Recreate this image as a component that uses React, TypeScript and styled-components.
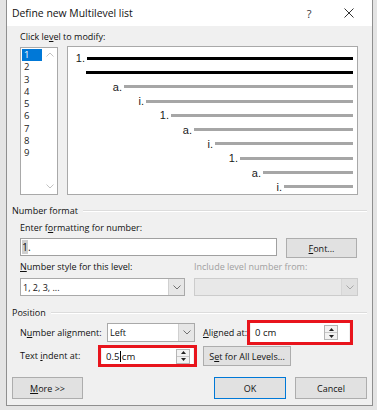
import React from 'react';
import styled, { createGlobalStyle } from 'styled-components';

const GlobalStyle = createGlobalStyle`
  html, body {
    margin: 0;
    padding: 0;
  }
  body {
    font-family: "Open Sans", "Noto Sans", sans-serif;
    font-size: 9px;
    color: #111;
  }
  * {
    box-sizing: border-box;
  }
`;

const Page = styled.div`
  width: 377px;
  height: 410px;
  overflow: hidden;
  display: flex;
  align-items: flex-start;
  padding-left: 6px;
  background: #e4e4e4;
`;

const Dialog = styled.div`
  width: 367px;
  height: 406px;
  border: 1px solid #8f8f8f;
  border-top: none;
  background: #f0f0f0;
  display: flex;
  flex-direction: column;
`;

const TitleBar = styled.div`
  height: 26px;
  background: #fff;
  display: flex;
  align-items: center;
  padding-left: 5px;
`;

const Title = styled.div`
  flex: 1;
  font-size: 10.4px;
`;

const TitleButton = styled.div<{ $w: number }>`
  width: ${(p) => p.$w}px;
  height: 26px;
  display: flex;
  align-items: center;
  justify-content: center;
  font-size: 11px;
  color: #333;
`;

const Body = styled.div`
  display: flex;
  flex-direction: column;
  padding: 3px 5px 0 5px;
`;

const Label = styled.div<{ $muted?: boolean; $w?: number }>`
  height: 16px;
  line-height: 16px;
  white-space: nowrap;
  color: ${(p) => (p.$muted ? '#a0a0a0' : '#111')};
  ${(p) => (p.$w ? `width: ${p.$w}px; flex: none;` : '')}
`;

const Indent = styled.div<{ $top?: number }>`
  margin-left: 8px;
  margin-top: ${(p) => p.$top ?? 0}px;
  display: flex;
  align-items: flex-start;
`;

const U = styled.span`
  text-decoration: underline;
`;

const LevelList = styled.div`
  width: 38px;
  height: 148px;
  border: 1px solid #a9a9a9;
  background: #fff;
  display: flex;
  flex: none;
`;

const LevelItems = styled.div`
  flex: 1;
  padding: 1px 0 0 1px;
`;

const LevelItem = styled.div<{ $selected?: boolean }>`
  height: 12.25px;
  line-height: 12.25px;
  padding-left: 2px;
  font-size: 9.5px;
  background: ${(p) => (p.$selected ? '#0078d7' : 'transparent')};
  color: ${(p) => (p.$selected ? '#fff' : '#222')};
`;

const ScrollTrack = styled.div`
  width: 15px;
  display: flex;
  flex-direction: column;
  justify-content: space-between;
  align-items: center;
  padding: 4px 0 5px;
`;

const Preview = styled.div`
  margin-left: 9px;
  width: 291px;
  height: 149px;
  margin-top: -1px;
  border: 1px solid #a9a9a9;
  background: #fff;
  padding: 4px 4px 0 0;
  display: flex;
  flex-direction: column;
`;

const PreviewRow = styled.div`
  height: 14.55px;
  display: flex;
  align-items: center;
`;

const PreviewLabel = styled.div<{ $w: number }>`
  width: ${(p) => p.$w}px;
  flex: none;
  text-align: right;
  padding-right: 2px;
  font-family: "Liberation Sans", Arial, sans-serif;
  font-size: 11px;
  color: #1a1a1a;
`;

const PreviewLine = styled.div<{ $dark?: boolean }>`
  flex: 1;
  height: 3px;
  background: ${(p) => (p.$dark ? '#000' : '#a6a6a6')};
`;

const GroupHeader = styled.div<{ $top: number }>`
  margin-top: ${(p) => p.$top}px;
  height: 16px;
  display: flex;
  align-items: center;
  gap: 5px;
  &::after {
    content: '';
    flex: 1;
    height: 1px;
    background: #dcdcdc;
    box-shadow: 0 1px 0 #fff;
  }
`;

const TextBox = styled.div<{ $w: number }>`
  width: ${(p) => p.$w}px;
  height: 18px;
  border: 1px solid #a0a0a0;
  background: #fff;
  display: flex;
  align-items: center;
  padding-left: 1px;
  font-size: 10.5px;
  flex: none;
`;

const Selected = styled.span`
  background: #cfcfcf;
`;

const Button = styled.div<{ $w: number; $h?: number; $left?: number; $default?: boolean }>`
  width: ${(p) => p.$w}px;
  height: ${(p) => p.$h ?? 22}px;
  margin-left: ${(p) => p.$left ?? 0}px;
  flex: none;
  background: #e1e1e1;
  border: 1px solid ${(p) => (p.$default ? '#0078d7' : '#adadad')};
  display: flex;
  align-items: center;
  justify-content: center;
  white-space: nowrap;
`;

const Select = styled.div<{ $w: number; $h?: number; $disabled?: boolean; $left?: number }>`
  width: ${(p) => p.$w}px;
  height: ${(p) => p.$h ?? 18}px;
  margin-left: ${(p) => p.$left ?? 0}px;
  flex: none;
  border: 1px solid ${(p) => (p.$disabled ? '#cccccc' : '#a9a9a9')};
  background: ${(p) => (p.$disabled ? '#e8e8e8' : '#fff')};
  display: flex;
  align-items: stretch;
`;

const SelectText = styled.div`
  flex: 1;
  display: flex;
  align-items: center;
  padding-left: 2px;
`;

const SelectArrow = styled.div<{ $disabled?: boolean }>`
  width: 16px;
  background: ${(p) => (p.$disabled ? '#e0e0e0' : '#e6e6e6')};
  border-left: 1px solid ${(p) => (p.$disabled ? '#d6d6d6' : '#d0d0d0')};
  display: flex;
  align-items: center;
  justify-content: center;
`;

const PosRow = styled.div<{ $h: number }>`
  height: ${(p) => p.$h}px;
  margin-left: 8px;
  display: flex;
  align-items: center;
`;

const Highlight = styled.div<{ $w: number; $h: number }>`
  width: ${(p) => p.$w}px;
  height: ${(p) => p.$h}px;
  flex: none;
  border: 3px solid #e8141c;
  padding: 0 1px;
  display: flex;
`;

const SpinBox = styled.div<{ $gap: number }>`
  flex: 1;
  background: #fff;
  display: flex;
  align-items: center;
  padding: 0 ${(p) => p.$gap}px 0 4px;
  font-size: 9.5px;
`;

const SpinValue = styled.div`
  flex: 1;
  display: flex;
  align-items: center;
`;

const Caret = styled.span`
  display: inline-block;
  width: 1px;
  height: 11px;
  background: #000;
  margin: 0 1px 0 0.5px;
`;

const Spinner = styled.div`
  width: 14px;
  height: 15px;
  border: 1px solid #b5b5b5;
  background: #f2f2f2;
  display: flex;
  flex-direction: column;
`;

const SpinHalf = styled.div<{ $bottom?: boolean }>`
  flex: 1;
  display: flex;
  align-items: center;
  justify-content: center;
  ${(p) => (p.$bottom ? 'border-top: 1px solid #c8c8c8;' : '')}
`;

const Footer = styled.div`
  margin-top: 10px;
  display: flex;
`;

const Chevron = ({ up, color = '#707070' }: { up?: boolean; color?: string }) => (
  <svg width="8" height="5" viewBox="0 0 8 5">
    <path
      d={up ? 'M0.5 4.5 L4 1 L7.5 4.5' : 'M0.5 0.5 L4 4 L7.5 0.5'}
      fill="none"
      stroke={color}
      strokeWidth="1"
    />
  </svg>
);

const Tri = ({ up }: { up?: boolean }) => (
  <svg width="5" height="3" viewBox="0 0 5 3">
    <path d={up ? 'M0 3 L2.5 0 L5 3 Z' : 'M0 0 L2.5 3 L5 0 Z'} fill="#222" />
  </svg>
);

const Spin = ({ gap, children }: { gap: number; children: React.ReactNode }) => (
  <SpinBox $gap={gap}>
    <SpinValue>{children}</SpinValue>
    <Spinner>
      <SpinHalf>
        <Tri up />
      </SpinHalf>
      <SpinHalf $bottom>
        <Tri />
      </SpinHalf>
    </Spinner>
  </SpinBox>
);

const previewRows = [
  { label: '1.', start: 87, dark: true },
  { label: '', start: 86, dark: true },
  { label: 'a.', start: 124 },
  { label: 'i.', start: 146 },
  { label: '1.', start: 171 },
  { label: 'a.', start: 194 },
  { label: 'i.', start: 215 },
  { label: '1.', start: 240 },
  { label: 'a.', start: 263 },
  { label: 'i.', start: 284 },
];

const App = () => {
  return (
    <Page>
      <GlobalStyle />
      <Dialog>
        <TitleBar>
          <Title>Define new Multilevel list</Title>
          <TitleButton $w={34}>?</TitleButton>
          <TitleButton $w={46}>
            <svg width="10" height="10" viewBox="0 0 10 10">
              <path d="M0.5 0.5 L9.5 9.5 M9.5 0.5 L0.5 9.5" stroke="#333" strokeWidth="1" />
            </svg>
          </TitleButton>
        </TitleBar>
        <Body>
          <Indent>
            <Label>
              Click le<U>v</U>el to modify:
            </Label>
          </Indent>
          <Indent $top={2}>
            <LevelList>
              <LevelItems>
                {[1, 2, 3, 4, 5, 6, 7, 8, 9].map((n) => (
                  <LevelItem key={n} $selected={n === 1}>
                    {n}
                  </LevelItem>
                ))}
              </LevelItems>
              <ScrollTrack>
                <Chevron up color="#c2c2c2" />
                <Chevron color="#c2c2c2" />
              </ScrollTrack>
            </LevelList>
            <Preview>
              {previewRows.map((r, i) => (
                <PreviewRow key={i}>
                  <PreviewLabel $w={r.start - 68}>{r.label}</PreviewLabel>
                  <PreviewLine $dark={r.dark} />
                </PreviewRow>
              ))}
            </Preview>
          </Indent>

          <GroupHeader $top={7}>Number format</GroupHeader>
          <Indent $top={2}>
            <Label>
              Enter f<U>o</U>rmatting for number:
            </Label>
          </Indent>
          <Indent $top={2}>
            <TextBox $w={257}>
              <Selected>1</Selected>.
            </TextBox>
            <Button $w={71} $h={20} $left={9}>
              <span>
                <U>F</U>ont...
              </span>
            </Button>
          </Indent>
          <Indent $top={1}>
            <Label $w={174}>
              <U>N</U>umber style for this level:
            </Label>
            <Label $muted>Include level number from:</Label>
          </Indent>
          <Indent $top={3}>
            <Select $w={165}>
              <SelectText>1, 2, 3, ...</SelectText>
              <SelectArrow>
                <Chevron />
              </SelectArrow>
            </Select>
            <Select $w={164} $left={9} $disabled>
              <SelectText />
              <SelectArrow $disabled>
                <Chevron color="#a8a8a8" />
              </SelectArrow>
            </Select>
          </Indent>

          <GroupHeader $top={8}>Position</GroupHeader>
          <PosRow $h={25}>
            <Label $w={87}>
              N<U>u</U>mber alignment:
            </Label>
            <Select $w={88} $h={19}>
              <SelectText>Left</SelectText>
              <SelectArrow>
                <Chevron />
              </SelectArrow>
            </Select>
            <Label $w={44} style={{ marginLeft: 8 }}>
              <U>A</U>ligned at:
            </Label>
            <Highlight $w={106} $h={25}>
              <Spin gap={11}>0 cm</Spin>
            </Highlight>
          </PosRow>
          <PosRow $h={22}>
            <Label $w={78}>
              Text <U>i</U>ndent at:
            </Label>
            <Highlight $w={99} $h={22}>
              <Spin gap={3}>
                0.5
                <Caret />
                cm
              </Spin>
            </Highlight>
            <Button $w={88} $h={20} $left={6}>
              <span>
                S<U>e</U>t for All Levels...
              </span>
            </Button>
          </PosRow>

          <Footer>
            <Button $w={71}>
              <span>
                <U>M</U>ore &gt;&gt;
              </span>
            </Button>
            <Button $w={72} $left={131} $default>
              OK
            </Button>
            <Button $w={72} $left={9}>
              Cancel
            </Button>
          </Footer>
        </Body>
      </Dialog>
    </Page>
  );
};

export default App;
